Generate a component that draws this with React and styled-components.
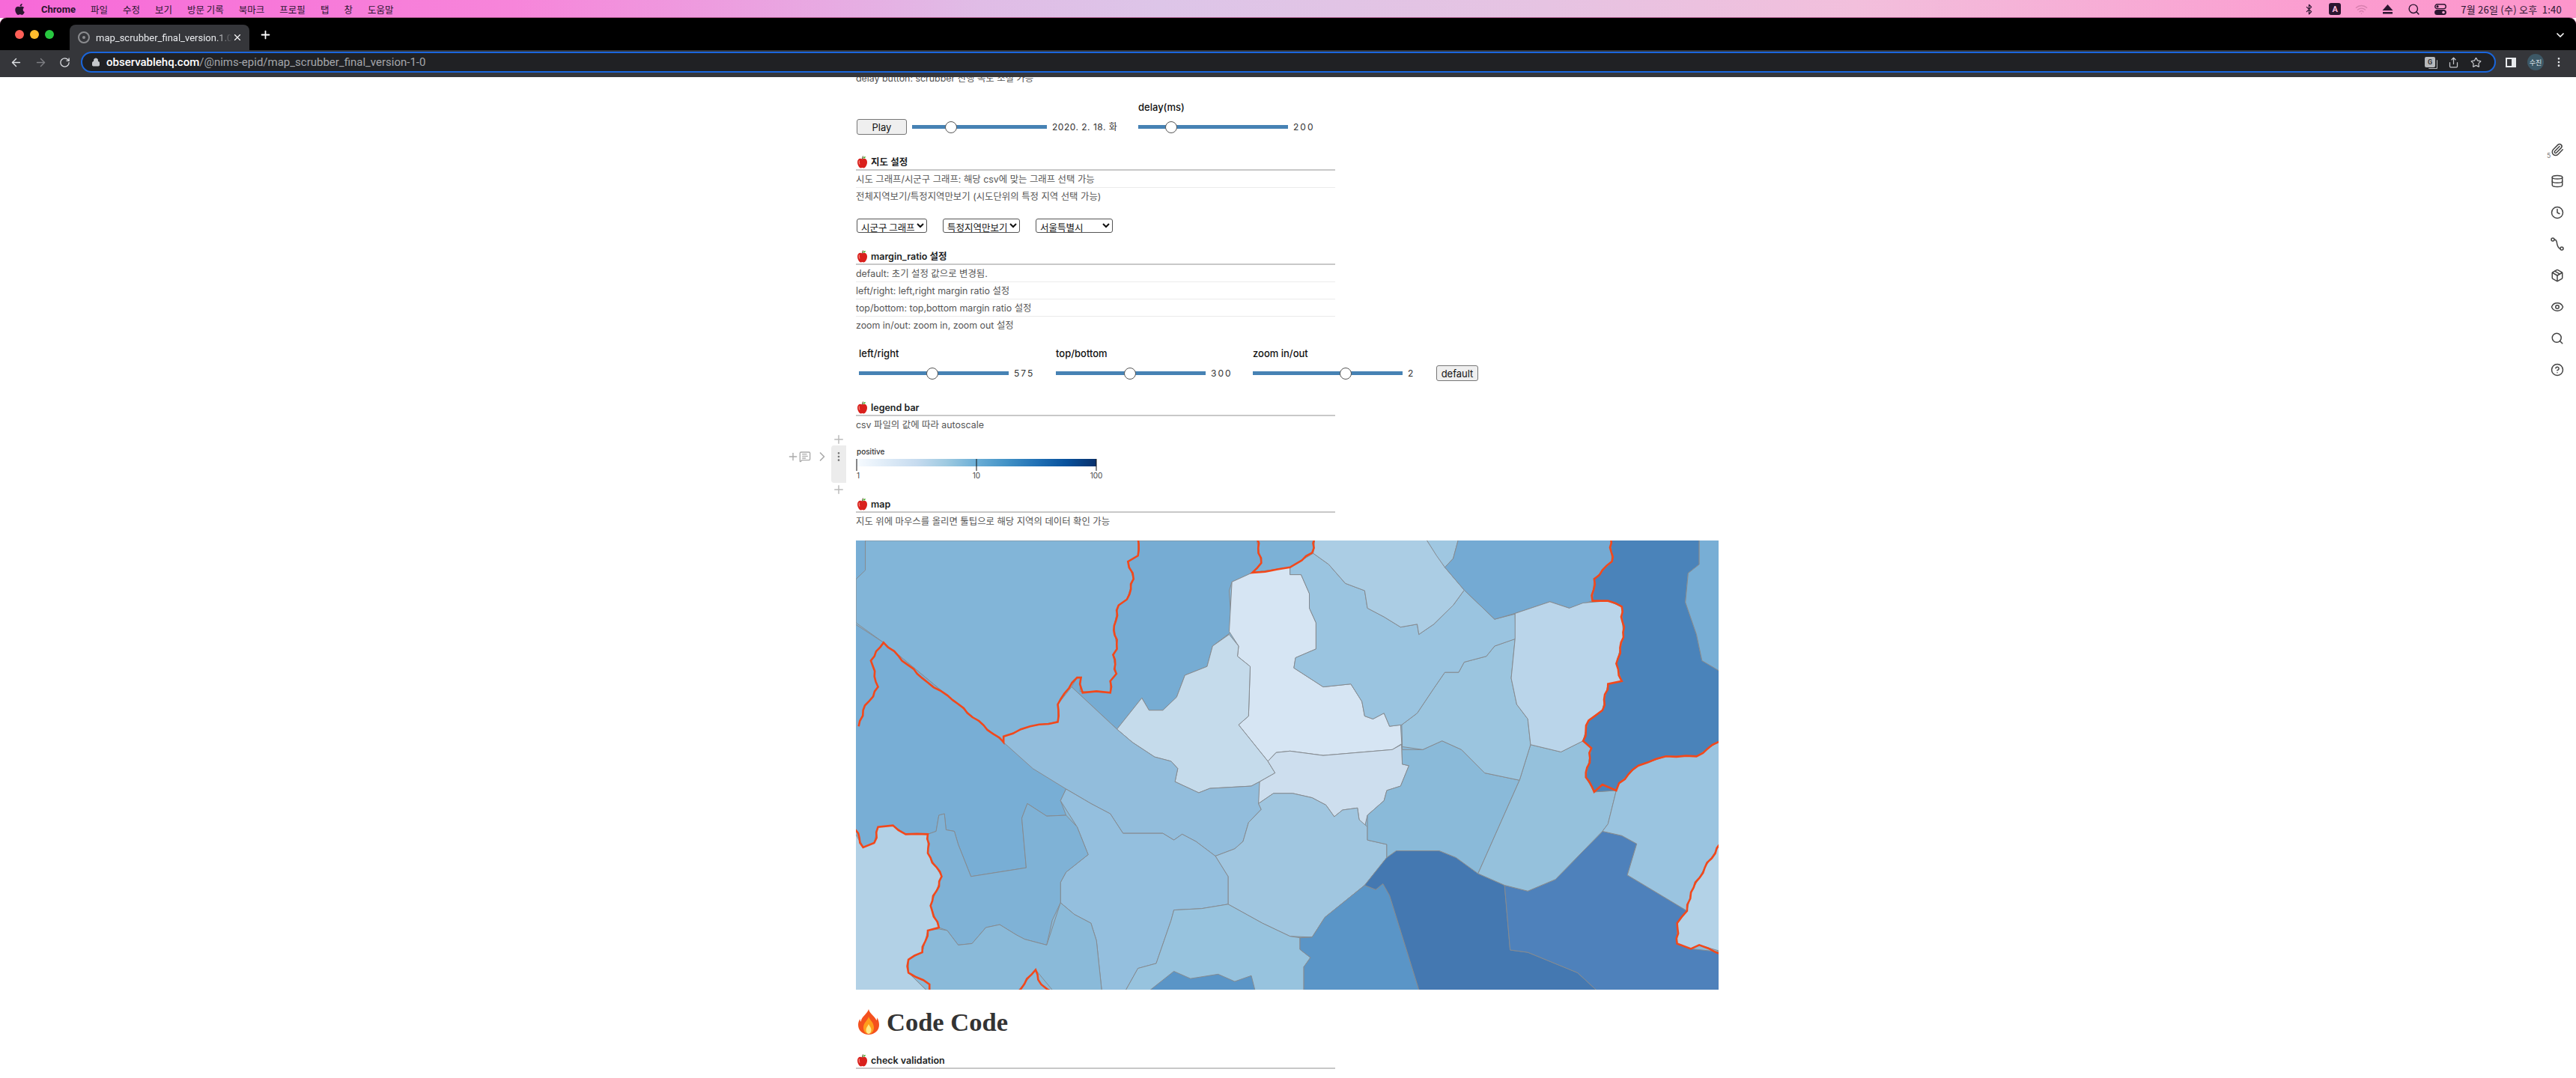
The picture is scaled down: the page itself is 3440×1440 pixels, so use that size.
import React from 'react';
import styled, { createGlobalStyle } from 'styled-components';
import {
  ArrowLeft, ArrowRight, RotateCw, Lock, Plus, X, ChevronDown, Star, Share, Search,
  Paperclip, Database, Clock, Package, Eye, CircleHelp, Bluetooth, Wifi, EllipsisVertical,
  ChevronRight, MessageSquareText,
} from 'lucide-react';
import { FaApple } from 'react-icons/fa';

const KR = `Inter, "Noto Sans CJK KR", sans-serif`;

const GlobalStyle = createGlobalStyle`
  html, body { margin: 0; padding: 0; background: #fff; }
  body { width: 3440px; height: 1440px; overflow: hidden; font-family: ${KR}; }
  * { box-sizing: border-box; }
`;

const Shell = styled.div`
  display: flex;
  flex-direction: column;
  width: 3440px;
  height: 1440px;
  overflow: hidden;
`;

/* mac menu bar */
const MenuBar = styled.div`
  display: flex;
  align-items: center;
  height: 24px;
  flex: none;
  padding: 0 19px 0 18px;
  color: #2b1530;
  font: 12.5px "Noto Sans CJK KR", sans-serif;
  background: linear-gradient(90deg, #f769d8 0%, #f785da 20%, #e0bce6 38%, #ddc5e8 45%, #e6c3e2 60%, #f2bfdc 72%, #fb9dd0 90%, #fd95cb 100%);
`;

const MenuItems = styled.div`
  display: flex;
  align-items: center;
  gap: 20px;
  margin-left: 20px;
`;

const AppName = styled.span`
  font: 700 13px Roboto, sans-serif;
`;

const MenuRight = styled.div`
  display: flex;
  align-items: center;
  gap: 19px;
  margin-left: auto;
`;

const InputBadge = styled.span`
  display: flex;
  align-items: center;
  justify-content: center;
  width: 16px;
  height: 16px;
  border-radius: 3px;
  color: #fbd;
  background: #2a1530;
  font: 700 11px Roboto, sans-serif;
`;

const Clock12 = styled.span`
  font-size: 13px;
  letter-spacing: 0.25px;
  white-space: pre;
`;

/* tab strip */
const TabStrip = styled.div`
  display: flex;
  align-items: flex-end;
  height: 43px;
  flex: none;
  padding: 0 13px 0 20px;
  background: #000;
  border-radius: 9px 9px 0 0;
  box-shadow: 0 -1px 0 #a0507f;
  color: #fff;
`;

const Lights = styled.div`
  display: flex;
  gap: 8px;
  align-self: center;
  margin-top: 1px;
  margin-right: 21px;
`;

const Light = styled.span`
  width: 12px;
  height: 12px;
  border-radius: 50%;
  background: ${p => p.$color};
`;

const Tab = styled.div`
  display: flex;
  align-items: center;
  width: 240px;
  height: 34px;
  padding: 0 9px 0 11px;
  background: #35363a;
  border-radius: 8px 8px 0 0;
  font: 13px Roboto, sans-serif;
`;

const Favicon = styled.span`
  display: flex;
  align-items: center;
  justify-content: center;
  flex: none;
  width: 16px;
  height: 16px;
  margin-right: 8px;
  border: 2px solid #8b8c8f;
  border-radius: 50%;
  &::after {
    content: '';
    width: 4px;
    height: 4px;
    border-radius: 50%;
    background: #8b8c8f;
  }
`;

const TabTitle = styled.span`
  flex: 1;
  overflow: hidden;
  white-space: nowrap;
  color: #e8eaed;
  mask-image: linear-gradient(90deg, #000 88%, transparent);
`;

const NewTab = styled.span`
  display: flex;
  align-self: center;
  margin-left: 13px;
  margin-top: 1px;
`;

const StripEnd = styled.span`
  display: flex;
  align-self: center;
  margin-left: auto;
  margin-top: 2px;
`;

/* address bar */
const Toolbar = styled.div`
  display: flex;
  align-items: center;
  height: 36px;
  flex: none;
  padding: 0 11px 4px 13px;
  background: #35363a;
  color: #e8eaed;
`;

const NavButton = styled.span`
  display: flex;
  width: 33px;
  color: ${p => (p.$off ? '#7d7e82' : '#dfe1e5')};
`;

const Omnibox = styled.div`
  display: flex;
  align-items: center;
  width: 3225px;
  height: 28px;
  margin-left: -4px;
  padding: 0 17px 0 12px;
  background: #202124;
  border: 2px solid #1a66dc;
  border-radius: 14px;
`;

const UrlHost = styled.span`
  margin-left: 8px;
  color: #fff;
  font: 500 15px Roboto, sans-serif;
`;

const UrlPath = styled.span`
  color: #a4a6aa;
  font: 15px Roboto, sans-serif;
`;

const OmniIcons = styled.div`
  display: flex;
  align-items: center;
  gap: 15px;
  margin-left: auto;
  color: #c4c6ca;
`;

const TranslateMark = styled.span`
  display: flex;
  align-items: center;
  justify-content: center;
  width: 14px;
  height: 14px;
  margin-right: 2px;
  border-radius: 2px;
  background: #b7b9bc;
  box-shadow: 3px 2px 0 -1px #202124, 4px 3px 0 -1px #b7b9bc;
  color: #333;
  font: 700 9px Roboto, sans-serif;
`;

const ToolEnd = styled.div`
  display: flex;
  align-items: center;
  margin-left: 13px;
`;

const PanelIcon = styled.span`
  width: 14px;
  height: 13px;
  border: 2px solid #e8eaed;
  border-right-width: 6px;
`;

const Avatar = styled.span`
  display: flex;
  align-items: center;
  justify-content: center;
  width: 22px;
  height: 22px;
  margin: 0 12px 0 15px;
  border-radius: 50%;
  background: #3d5866;
  color: #dfe6ea;
  font: 9px "Noto Sans CJK KR", sans-serif;
`;

/* notebook page */
const Page = styled.main`
  display: flex;
  flex: 1;
  min-height: 0;
  overflow: hidden;
  padding-left: 1143px;
  background: #fff;
`;

const Notebook = styled.div`
  width: 1152px;
  flex: none;
  color: #555;
  font: 12.4px/23px ${KR};
`;

const ClippedLine = styled.div`
  width: 640px;
  margin-top: -7px;
  line-height: 18px;
`;

const ControlRow = styled.div`
  display: flex;
  align-items: flex-end;
  margin-top: ${p => p.$top}px;
  padding-left: ${p => p.$inset}px;
  color: #222;
`;

const ControlGroup = styled.div`
  display: flex;
  flex-direction: column;
  width: ${p => p.$width}px;
  flex: none;
`;

const ControlLabel = styled.div`
  height: 18px;
  margin-bottom: 7px;
  color: #111;
  font: 500 13px/18px ${KR};
`;

const SliderLine = styled.div`
  display: flex;
  align-items: center;
  height: 21px;
`;

const Range = styled.input.attrs({ type: 'range', min: 0, max: 1000 })`
  appearance: none;
  width: ${p => p.$width}px;
  height: 16px;
  margin: 0;
  flex: none;
  background: transparent;
  &::-webkit-slider-runnable-track {
    height: 5px;
    background: #4682b4;
  }
  &::-webkit-slider-thumb {
    appearance: none;
    width: 16px;
    height: 16px;
    margin-top: -5.5px;
    border: 1px solid #555;
    border-radius: 50%;
    background: #fff;
  }
`;

const RangeValue = styled.span`
  margin-left: 7px;
  color: #333;
  font: 12px/21px ${KR};
  letter-spacing: ${p => (p.$wide ? '2px' : '0.5px')};
  white-space: nowrap;
`;

const PlainButton = styled.button`
  height: 21px;
  width: ${p => p.$width}px;
  flex: none;
  margin: 0 ${p => p.$gap || 0}px 0 0;
  padding: 0;
  border: 1px solid #767676;
  border-radius: 3px;
  background: #efefef;
  color: #111;
  font: 13px ${KR};
`;

const Heading = styled.h3`
  display: flex;
  align-items: center;
  gap: 4px;
  width: 640px;
  height: 21px;
  margin: ${p => p.$top}px 0 0;
  padding-left: 1px;
  border-bottom: 2px solid #c8c8c8;
  color: #1b1e23;
  font: 600 12.5px/18px ${KR};
`;

const NoteLine = styled.div`
  width: 640px;
  height: 23px;
  border-bottom: ${p => (p.$last ? 'none' : '1px solid #ebebeb')};
  white-space: nowrap;
`;

const SelectRow = styled.div`
  display: flex;
  gap: 21px;
  margin: 18px 0 0 1px;
`;

const Dropdown = styled.select`
  width: ${p => p.$width}px;
  height: 19px;
  padding: 0 0 0 1px;
  border: 1px solid #555;
  border-radius: 3px;
  background: #fff;
  color: #111;
  font: 12.5px "Noto Sans CJK KR", sans-serif;
`;

const LegendCell = styled.div`
  position: relative;
  height: 50px;
  margin-top: 16px;
`;

const CellGutter = styled.div`
  position: absolute;
  top: 0;
  left: -33px;
  display: flex;
  align-items: flex-start;
  justify-content: center;
  width: 20px;
  height: 50px;
  padding-top: 7px;
  border-radius: 4px 0 0 4px;
  background: #ececec;
  color: #777;
`;

const CellPlus = styled.span`
  position: absolute;
  left: -32px;
  top: ${p => p.$top}px;
  display: flex;
  color: #bbb;
`;

const CellTools = styled.div`
  position: absolute;
  left: -92px;
  top: 5px;
  display: flex;
  align-items: center;
  gap: 5px;
  color: #aaa;
`;

const ToolPair = styled.span`
  display: flex;
  align-items: center;
`;

const MapFrame = styled.svg`
  display: block;
  width: 1152px;
  height: 600px;
  margin-top: 14px;
`;

const PageTitle = styled.h1`
  display: flex;
  align-items: center;
  gap: 10px;
  height: 46px;
  margin: 20px 0 0;
  padding-left: 3px;
  color: #333;
  font: 700 34.5px/46px "Liberation Serif", serif;
`;

const SideRail = styled.aside`
  display: flex;
  flex-direction: column;
  align-items: center;
  gap: 24px;
  width: 18px;
  flex: none;
  margin-left: 1111px;
  padding-top: 88px;
  color: #444;
`;

const RailItem = styled.span`
  position: relative;
  display: flex;
  height: 18px;
`;

const AttachCount = styled.span`
  position: absolute;
  left: -5px;
  bottom: -4px;
  color: #777;
  font: 9px Roboto, sans-serif;
`;

const AppleMark = () => (
  <svg width="15" height="17" viewBox="0 0 15 17">
    <path d="M7.5 4.5C5 2.8 1 3.6 1 8.5c0 4.5 3 8 4.6 8 .8 0 1.2-.4 1.9-.4s1.1.4 1.9.4C11 16.500 14 13 14 8.500c0-4.900-4-5.700-6.500-4z" fill="#d9201c" />
    <path d="M3.500 6.500C3 8 3 10 4 11.500" stroke="#f58a80" strokeWidth="1.200" fill="none" />
    <path d="M7.500 4.500C7.500 3 7.800 1.500 8.500.5" stroke="#5b3a1c" strokeWidth="1" fill="none" />
    <path d="M8 3.500C8.500 1.500 10.500 1 12 1.200 11.800 2.800 10 4 8 3.500z" fill="#4fae32" />
  </svg>
);

const FlameMark = () => (
  <svg width="28" height="34" viewBox="0 0 28 34">
    <path d="M14 0c1 6 8 9 10.500 15 .6-1 .8-2.500.7-3.800C27 14 28 17.500 28 21c0 7.500-6 13-14 13S0 28.500 0 21c0-3 1-5.500 2.500-8 0 1.500.4 2.800 1.300 3.700C4 10 12 7 14 0z" fill="#f4511e" />
    <path d="M14 10c1 4 7 8 7 14.500C21 29.500 18 33 14 33s-7-3.500-7-8.500C7 18 13 15 14 10z" fill="#ff9d1c" />
    <path d="M14 20c.8 2.500 3.500 4.500 3.500 7.500 0 3-1.500 5.500-3.500 5.500s-3.500-2.500-3.500-5.500c0-3 2.700-5 3.500-7.500z" fill="#ffe98a" />
  </svg>
);

const EjectMark = () => (
  <svg width="15" height="13" viewBox="0 0 15 13" fill="#2b1530">
    <path d="M7.500 0l7 8H.5z" /><rect x="1" y="10" width="13" height="2.500" />
  </svg>
);

const ToggleMark = () => (
  <svg width="16" height="15" viewBox="0 0 16 15">
    <rect x=".8" y=".8" width="14.400" height="5.800" rx="2.900" fill="none" stroke="#2b1530" strokeWidth="1.400" />
    <circle cx="4" cy="3.700" r="1.600" fill="#2b1530" />
    <rect x=".1" y="8" width="15.800" height="7" rx="3.500" fill="#2b1530" />
    <circle cx="12" cy="11.500" r="1.800" fill="#f5a3cf" />
  </svg>
);

const SplineMark = () => (
  <svg width="18" height="18" viewBox="0 0 18 18" fill="none" stroke="currentColor" strokeWidth="1.500">
    <circle cx="3" cy="3" r="2" /><circle cx="15" cy="15" r="2" />
    <path d="M5 3c4 0 3 4 4 7s1.500 5 4 5" />
  </svg>
);

const LegendBar = () => {
  const stops = ['#f7fbff', '#deebf7', '#c6dbef', '#9ecae1', '#6baed6', '#4292c6', '#2171b5', '#08519c', '#08306b'];
  return (
    <svg width="345" height="50" viewBox="0 0 345 50" style={{ display: 'block', overflow: 'visible' }}>
      <defs>
        <linearGradient id="blues">
          {stops.map((c, i) => <stop key={c} offset={i / 8} stopColor={c} />)}
        </linearGradient>
      </defs>
      <text x="1" y="12" fontSize="10" fontWeight="500" fill="#333" fontFamily="Inter, sans-serif">positive</text>
      <rect x="1" y="18" width="320" height="10" fill="url(#blues)" />
      {[[1, '1', 'start'], [161, '10', 'middle'], [321, '100', 'middle']].map(([x, label, anchor]) => (
        <g key={label}>
          <line x1={x} x2={x} y1="18" y2="34" stroke="#111" strokeWidth="1" />
          <text x={x} y="44" fontSize="10" textAnchor={anchor} fill="#444" fontFamily="Inter, sans-serif">{label}</text>
        </g>
      ))}
    </svg>
  );
};

// region fills, traced off the reference, in 1560x1540 map units
const regions = [
  ['#82b5d8', '5,8 515,8 515,60 497,80 507,140 495,210 480,230 472,300 477,380 470,400 476,465 465,490 465,530 415,530 410,500 412,478 405,478 390,515 370,570 370,630 320,645 272,680 272,700 55,358 5,290'],
  ['#78aed5', '0,150 22,110 22,0 0,0'],
  ['#78aed5', '0,290 55,358 272,700 385,860 375,900 385,950 350,953 315,910 305,960 313,1130 213,1160 190,1050 183,1005 168,1000 165,945 155,950 150,1005 135,1015 95,1015 72,985 45,990 38,1045 18,1060 0,980'],
  ['#76acd3', '515,8 730,8 738,85 722,118 685,150 680,180 685,320 650,370 640,440 600,470 585,545 560,590 535,590 522,548 477,655 395,510 405,478 412,478 410,525 465,530 465,490 476,465 470,400 477,380 472,300 480,230 495,210 507,140 497,80 515,60'],
  ['#7cb1d6', '730,8 835,8 830,50 790,100 722,118 738,85'],
  ['#d6e5f3', '722,118 790,100 790,125 810,125 825,190 825,240 837,290 837,380 800,410 797,445 850,510 900,500 920,560 925,610 940,620 960,600 970,645 990,640 992,705 975,725 850,745 790,730 765,735 750,765 697,640 715,610 718,440 695,405 697,370 680,320 685,150'],
  ['#c5dbeb', '680,330 697,370 695,405 718,440 715,610 697,640 750,765 763,805 735,835 720,850 645,858 625,873 582,835 587,790 575,765 545,750 505,700 477,655 522,548 535,590 560,590 585,545 600,470 640,440 650,370'],
  ['#cddeee', '750,765 765,735 790,730 850,745 975,725 992,707 993,775 1005,780 990,850 965,865 960,900 930,950 925,990 915,965 912,925 885,932 870,955 855,915 830,890 795,875 760,875 733,910 730,870 735,835 763,805'],
  ['#92bddc', '272,700 272,680 320,645 370,630 370,570 395,510 477,655 505,700 545,750 575,765 587,790 582,835 625,873 645,858 720,850 735,835 733,910 738,930 715,975 705,1040 690,1065 655,1090 620,1040 595,1015 580,1035 560,1012 488,1012 465,945 430,910 385,860 325,790'],
  ['#a0c6e0', '733,910 760,875 795,875 830,890 855,915 870,955 885,932 912,925 915,965 930,990 930,1035 965,1050 965,1095 925,1190 853,1300 830,1368 790,1365 740,1320 678,1255 678,1160 655,1090 690,1065 705,1040 715,975 738,930'],
  ['#94bfde', '385,860 430,910 465,945 488,1012 560,1012 580,1035 595,1015 620,1040 655,1090 678,1160 678,1255 630,1270 580,1275 575,1310 548,1458 515,1475 490,1560 450,1560 440,1380 430,1320 400,1290 375,1250 375,1180 385,1145 425,1085 405,990 375,900'],
  ['#7fb2d6', '135,1015 150,1005 155,950 165,945 168,1000 183,1005 190,1050 213,1160 313,1130 305,960 315,910 350,953 385,950 405,990 425,1085 385,1145 375,1180 375,1250 360,1310 350,1395 310,1375 295,1360 265,1325 240,1335 215,1390 190,1395 170,1345 155,1335 140,1260 160,1160 135,1080'],
  ['#8abad9', '155,1340 170,1345 190,1395 215,1390 240,1335 265,1325 295,1360 310,1375 350,1395 375,1250 400,1290 430,1320 440,1380 450,1560 365,1560 330,1480 295,1560 138,1560 100,1490 100,1445 125,1420 135,1345'],
  ['#b2d1e6', '0,1000 18,1060 38,1045 45,990 72,985 95,1015 135,1015 135,1080 160,1160 140,1260 155,1335 135,1345 125,1420 100,1445 100,1490 138,1560 0,1560'],
  ['#97c3de', '580,1275 630,1270 678,1255 740,1320 790,1365 808,1370 808,1410 827,1438 815,1470 815,1560 490,1560 515,1475 548,1458 575,1310'],
  ['#5a95c7', '530,1560 580,1485 610,1510 660,1495 690,1520 720,1500 728,1560'],
  ['#5a95c7', '808,1370 830,1368 853,1300 925,1190 945,1205 958,1185 970,1225 1025,1560 815,1560 815,1470 827,1438 808,1410'],
  ['#4478b1', '965,1095 982,1072 1060,1072 1090,1095 1130,1150 1178,1190 1188,1412 1220,1420 1310,1490 1350,1560 1025,1560 970,1225 958,1185 945,1205 925,1190'],
  ['#4e81bb', '1178,1190 1220,1210 1270,1170 1355,1005 1390,1020 1417,1048 1400,1155 1508,1278 1490,1320 1490,1390 1515,1408 1575,1420 1575,1560 1350,1560 1310,1490 1220,1420 1188,1412'],
  ['#8abad9', '993,725 1030,725 1065,695 1100,725 1142,805 1205,830 1130,1150 1090,1095 1060,1072 982,1072 965,1095 965,1050 930,1035 930,990 930,950 960,900 965,865 990,850 1005,780 993,775 992,707'],
  ['#95c1dc', '1225,708 1280,733 1320,695 1335,720 1325,820 1340,870 1380,865 1365,980 1355,1005 1270,1170 1220,1210 1178,1190 1130,1150 1205,830'],
  ['#9bc5df', '992,640 1020,600 1050,515 1070,460 1095,460 1105,425 1145,405 1160,370 1197,345 1190,480 1200,570 1220,620 1225,708 1205,830 1142,805 1100,725 1065,695 1030,725 993,715'],
  ['#9ac4e0', '832,52 860,90 890,155 925,180 930,240 960,270 990,305 1020,295 1023,330 1050,295 1085,230 1105,178 1160,278 1197,260 1198,345 1160,370 1145,405 1105,425 1095,460 1070,460 1050,515 1020,600 992,640 970,645 960,600 940,620 925,610 920,560 900,500 850,510 797,445 800,410 837,380 837,290 825,240 825,190 810,125 790,125 790,100'],
  ['#abcde4', '835,0 1035,0 1060,70 1070,100 1105,178 1085,230 1050,295 1023,330 1020,295 990,305 960,270 930,240 925,180 890,155 860,90 832,52'],
  ['#9fc7e1', '1035,0 1095,0 1085,70 1070,100 1055,60'],
  ['#74aad3', '1095,0 1370,0 1372,80 1340,140 1337,215 1295,240 1260,218 1197,258 1160,278 1105,178 1070,100 1085,70'],
  ['#bad5ea', '1197,258 1260,218 1295,240 1320,222 1365,215 1390,235 1393,340 1380,430 1390,490 1365,500 1355,590 1330,625 1320,695 1280,733 1225,708 1220,620 1200,570 1190,480 1197,345'],
  ['#4a83ba', '1370,0 1530,0 1530,90 1510,120 1505,220 1525,330 1535,420 1575,465 1575,685 1525,748 1470,748 1420,780 1385,840 1380,865 1340,870 1325,820 1335,720 1320,695 1330,625 1355,590 1365,500 1390,490 1380,430 1393,340 1390,235 1365,215 1337,215 1340,140 1372,80'],
  ['#78aed5', '1530,0 1575,0 1575,465 1535,420 1525,330 1505,220 1510,120 1530,90'],
  ['#9ac4e0', '1575,685 1525,748 1470,748 1420,780 1385,840 1380,865 1365,980 1355,1005 1390,1020 1417,1048 1400,1155 1508,1278 1515,1215 1540,1130 1575,1030'],
  ['#b3d2e7', '1575,1030 1540,1130 1515,1215 1508,1278 1490,1320 1490,1390 1515,1408 1530,1395 1575,1420'],
];

const borders = [
  '515,0 515,60 497,80 507,140 495,210 480,230 472,300 477,380 470,400 476,465 465,490 465,530 440,525 415,530 410,500 412,478 405,478 390,515 370,570 370,630 320,645 272,680 272,700 180,555 125,480 55,358 32,420 45,510 18,590 10,645',
  '730,0 738,85 722,118 745,115 790,100 830,50 835,0',
  '1370,0 1372,80 1340,140 1337,215 1365,215 1390,235 1393,340 1380,430 1390,490 1365,500 1355,590 1330,625 1320,695 1335,720 1325,820 1340,870 1355,845 1380,865 1385,840 1420,780 1470,748 1525,748 1575,685',
  '0,980 18,1060 38,1045 45,990 72,985 95,1015 135,1015 135,1080 160,1160 140,1260 155,1335 135,1345 125,1420 100,1445 100,1490 138,1530 138,1560',
  '295,1560 330,1480 340,1530 365,1560',
  '1575,1030 1540,1130 1515,1215 1508,1278 1490,1320 1490,1390 1515,1408 1530,1395 1560,1420 1575,1430',
];

// the coast lines in the reference are jagged, so break up the long straight runs
const roughen = points => {
  const pts = points.split(' ').map(p => p.split(',').map(Number));
  const out = [];
  pts.forEach(([x, y], i) => {
    out.push(`${x},${y}`);
    const next = pts[i + 1];
    if (!next) return;
    const dx = next[0] - x;
    const dy = next[1] - y;
    const len = Math.hypot(dx, dy);
    const steps = Math.floor(len / 16);
    for (let s = 1; s < steps; s++) {
      const t = s / steps;
      const wob = Math.sin((x + y + s) * 1.7) * 2.2;
      out.push(`${x + dx * t - (dy / len) * wob},${y + dy * t + (dx / len) * wob}`);
    }
  });
  return out.join(' ');
};

const RegionMap = () => (
  <MapFrame viewBox="5 8 1560 1540" preserveAspectRatio="none">
    <rect x="0" y="0" width="1600" height="1600" fill="#8ab9d8" />
    {regions.map(([fill, points]) => (
      <polygon key={points} points={points} fill={fill} stroke="#868b90" strokeWidth="1" vectorEffect="non-scaling-stroke" />
    ))}
    {borders.map(points => (
      <polyline key={points} points={roughen(points)} fill="none" stroke="#f2481b" strokeWidth="2.6" vectorEffect="non-scaling-stroke" />
    ))}
  </MapFrame>
);

const SliderControl = ({ label, width, value, text, wide, groupWidth }) => (
  <ControlGroup $width={groupWidth}>
    {label && <ControlLabel>{label}</ControlLabel>}
    <SliderLine>
      <Range $width={width} defaultValue={value} />
      <RangeValue $wide={wide}>{text}</RangeValue>
    </SliderLine>
  </ControlGroup>
);

const menus = ['파일', '수정', '보기', '방문 기록', '북마크', '프로필', '탭', '창', '도움말'];
const railIcons = [Database, Clock, SplineMark, Package, Eye, Search, CircleHelp];

const App = () => (
  <Shell>
    <GlobalStyle />
    <MenuBar>
      <FaApple size={17} color="#2b1530" />
      <MenuItems>
        <AppName>Chrome</AppName>
        {menus.map(m => <span key={m}>{m}</span>)}
      </MenuItems>
      <MenuRight>
        <Bluetooth size={15} />
        <InputBadge>A</InputBadge>
        <Wifi size={17} color="#d77fae" />
        <EjectMark />
        <Search size={17} />
        <ToggleMark />
        <Clock12>{'7월 26일 (수) 오후  1:40'}</Clock12>
      </MenuRight>
    </MenuBar>

    <TabStrip>
      <Lights>
        <Light $color="#ff5f57" />
        <Light $color="#febc2e" />
        <Light $color="#28c840" />
      </Lights>
      <Tab>
        <Favicon />
        <TabTitle>map_scrubber_final_version.1.0</TabTitle>
        <X size={14} />
      </Tab>
      <NewTab><Plus size={17} strokeWidth={2.5} /></NewTab>
      <StripEnd><ChevronDown size={16} strokeWidth={2.5} /></StripEnd>
    </TabStrip>

    <Toolbar>
      <NavButton><ArrowLeft size={17} /></NavButton>
      <NavButton $off><ArrowRight size={17} /></NavButton>
      <NavButton><RotateCw size={15} /></NavButton>
      <Omnibox>
        <Lock size={12} fill="#c4c6ca" color="#c4c6ca" />
        <UrlHost>observablehq.com</UrlHost>
        <UrlPath>/@nims-epid/map_scrubber_final_version-1-0</UrlPath>
        <OmniIcons>
          <TranslateMark>G</TranslateMark>
          <Share size={15} />
          <Star size={15} />
        </OmniIcons>
      </Omnibox>
      <ToolEnd>
        <PanelIcon />
        <Avatar>수진</Avatar>
        <EllipsisVertical size={16} />
      </ToolEnd>
    </Toolbar>

    <Page>
      <Notebook>
        <ClippedLine>delay button: scrubber 진행 속도 조절 가능</ClippedLine>

        <ControlRow $top={20} $inset={1}>
          <PlainButton $width={67} $gap={7}>Play</PlainButton>
          <SliderControl width={180} value={268} text="2020. 2. 18. 화" groupWidth={302} />
          <SliderControl label="delay(ms)" width={200} value={196} text="200" wide groupWidth={260} />
        </ControlRow>

        <Heading $top={27}><AppleMark />지도 설정</Heading>
        <NoteLine>시도 그래프/시군구 그래프: 해당 csv에 맞는 그래프 선택 가능</NoteLine>
        <NoteLine $last>전체지역보기/특정지역만보기 (시도단위의 특정 지역 선택 가능)</NoteLine>

        <SelectRow>
          <Dropdown $width={94} defaultValue="a"><option value="a">시군구 그래프</option></Dropdown>
          <Dropdown $width={103} defaultValue="a"><option value="a">특정지역만보기</option></Dropdown>
          <Dropdown $width={103} defaultValue="a"><option value="a">서울특별시</option></Dropdown>
        </SelectRow>

        <Heading $top={22}><AppleMark />margin_ratio 설정</Heading>
        <NoteLine>default: 초기 설정 값으로 변경됨.</NoteLine>
        <NoteLine>left/right: left,right margin ratio 설정</NoteLine>
        <NoteLine>top/bottom: top,bottom margin ratio 설정</NoteLine>
        <NoteLine $last>zoom in/out: zoom in, zoom out 설정</NoteLine>

        <ControlRow $top={17} $inset={4}>
          <SliderControl label="left/right" width={200} value={489} text="575" wide groupWidth={263} />
          <SliderControl label="top/bottom" width={200} value={495} text="300" wide groupWidth={263} />
          <SliderControl label="zoom in/out" width={200} value={630} text="2" wide groupWidth={245} />
          <PlainButton $width={56}>default</PlainButton>
        </ControlRow>

        <Heading $top={26}><AppleMark />legend bar</Heading>
        <NoteLine $last>csv 파일의 값에 따라 autoscale</NoteLine>

        <LegendCell>
          <CellPlus $top={-17}><Plus size={18} /></CellPlus>
          <CellTools>
            <ToolPair>
              <Plus size={16} />
              <MessageSquareText size={16} />
            </ToolPair>
            <ChevronRight size={20} />
          </CellTools>
          <CellGutter><EllipsisVertical size={16} /></CellGutter>
          <CellPlus $top={50}><Plus size={18} /></CellPlus>
          <LegendBar />
        </LegendCell>

        <Heading $top={19}><AppleMark />map</Heading>
        <NoteLine $last>지도 위에 마우스를 올리면 툴팁으로 해당 지역의 데이터 확인 가능</NoteLine>

        <RegionMap />

        <PageTitle><FlameMark />Code Code</PageTitle>

        <Heading $top={19}><AppleMark />check validation</Heading>
      </Notebook>

      <SideRail>
        <RailItem>
          <Paperclip size={18} />
          <AttachCount>5</AttachCount>
        </RailItem>
        {railIcons.map((Icon, i) => (
          <RailItem key={i}><Icon size={18} /></RailItem>
        ))}
      </SideRail>
    </Page>
  </Shell>
);

export default App;
